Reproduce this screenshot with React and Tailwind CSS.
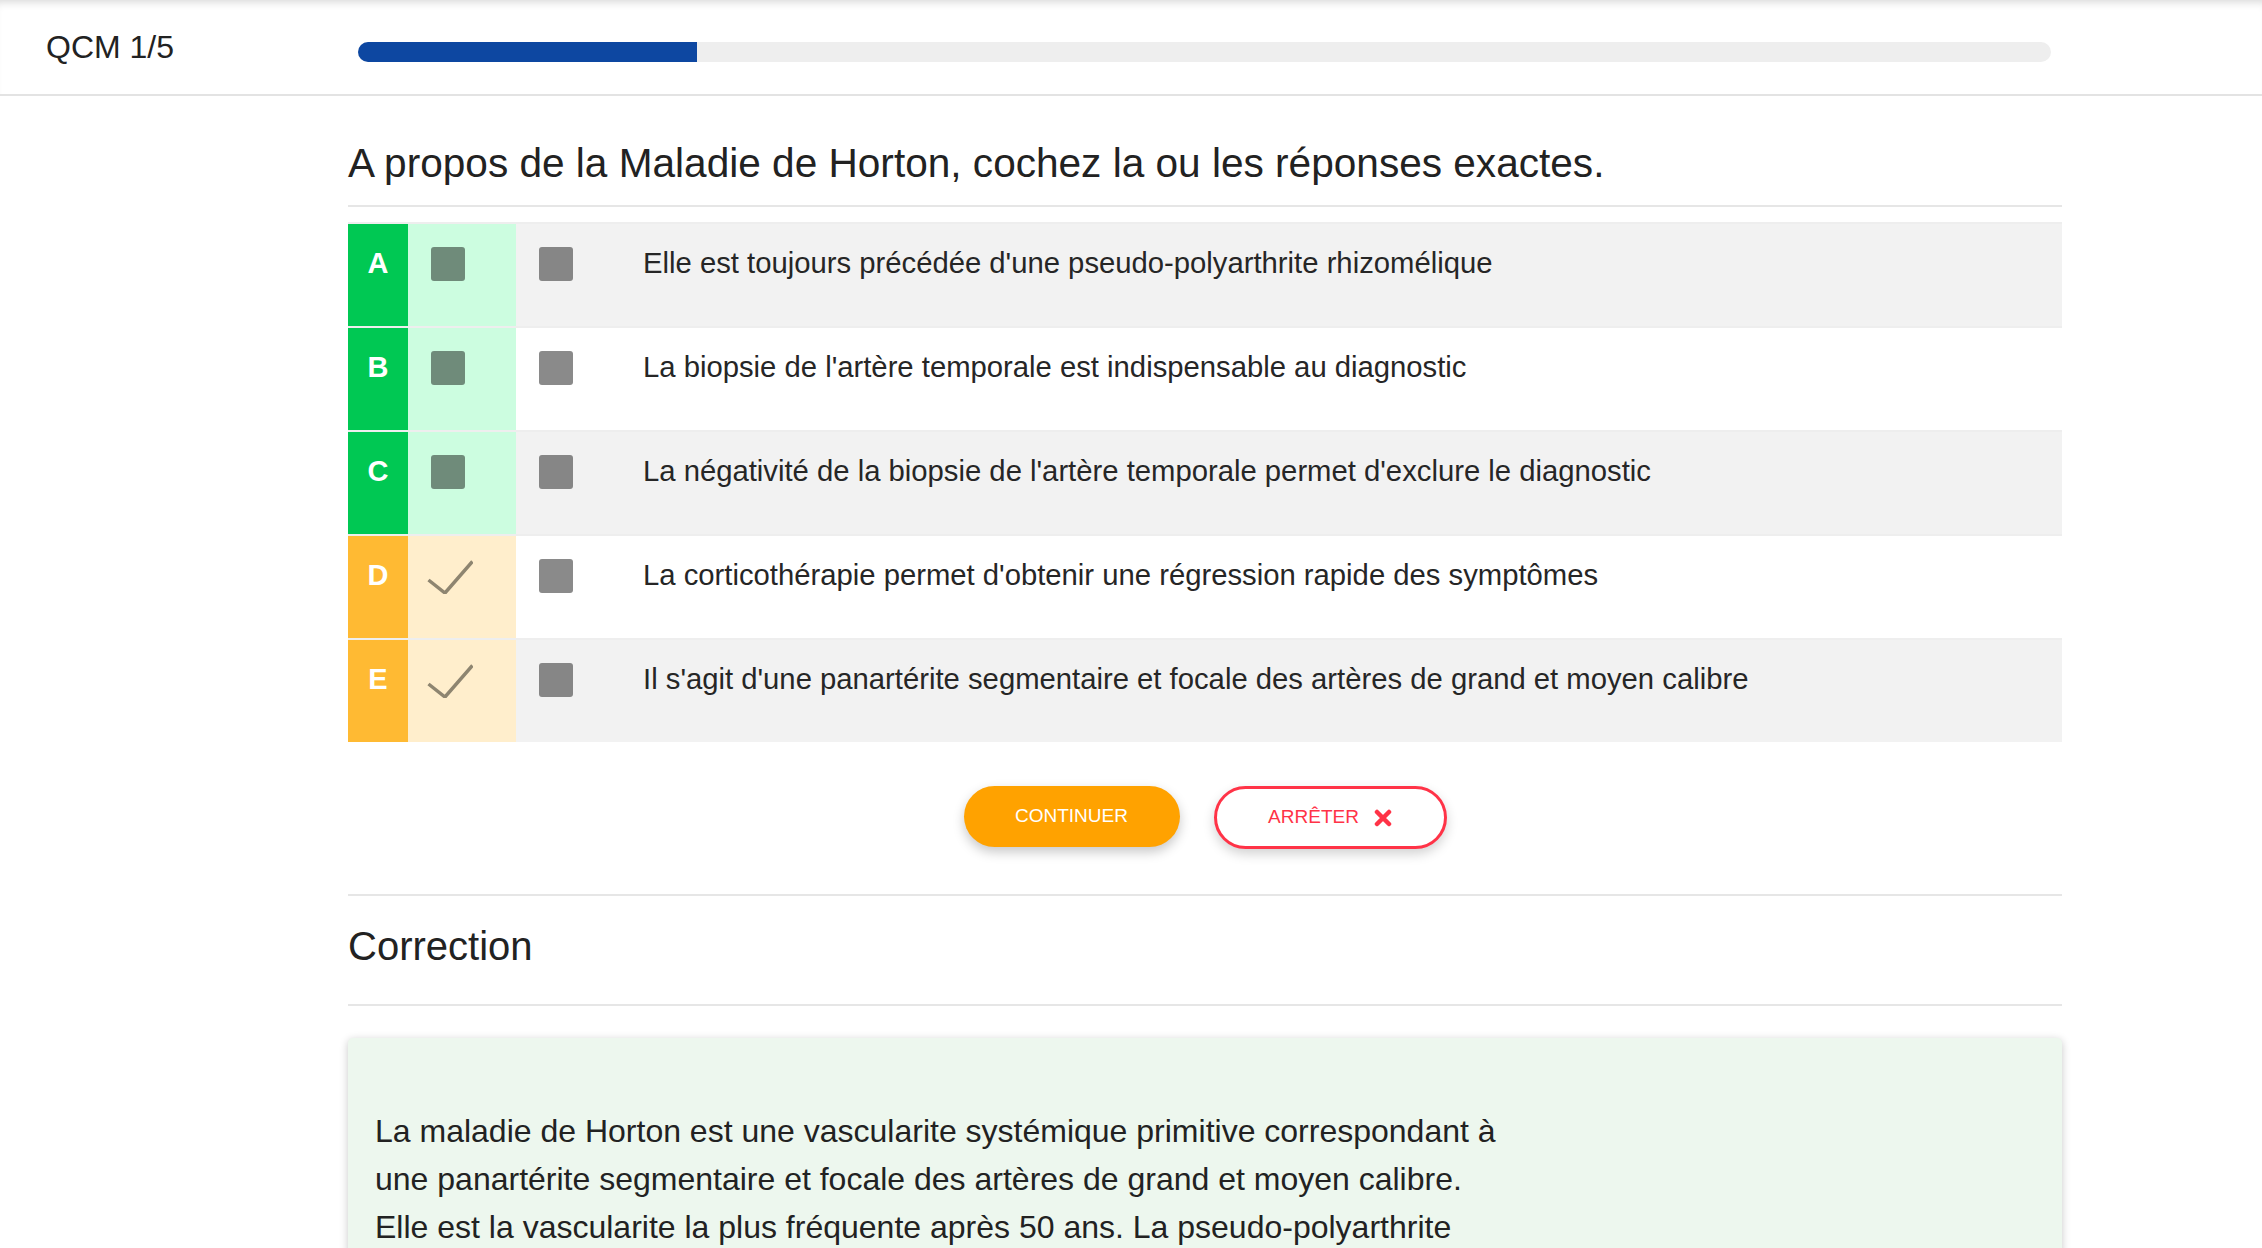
const OPTIONS = [
  { letter: "A", text: "Elle est toujours précédée d'une pseudo-polyarthrite rhizomélique", correct: false },
  { letter: "B", text: "La biopsie de l'artère temporale est indispensable au diagnostic", correct: false },
  { letter: "C", text: "La négativité de la biopsie de l'artère temporale permet d'exclure le diagnostic", correct: false },
  { letter: "D", text: "La corticothérapie permet d'obtenir une régression rapide des symptômes", correct: true },
  { letter: "E", text: "Il s'agit d'une panartérite segmentaire et focale des artères de grand et moyen calibre", correct: true },
];

const Check = () => (
  <svg width="46" height="34" viewBox="0 0 46 34" fill="none">
    <path d="M1.5 20 L18 33 L45.5 1.5" stroke="#8e8570" strokeWidth="3.5" />
  </svg>
);

const OptionRow = ({ option, index }) => {
  const striped = index % 2 === 0;
  return (
    <div className="flex h-[104px] border-t-2 border-[#eeeeee]">
      <div
        className={
          option.correct
            ? "w-[60px] bg-[#ffba33] pt-[23px] text-center text-[29px] leading-[33px] font-bold text-white"
            : "w-[60px] bg-[#00c853] pt-[23px] text-center text-[29px] leading-[33px] font-bold text-white"
        }
      >
        {option.letter}
      </div>
      <div className={option.correct ? "w-[108px] bg-[#ffeecc]" : "w-[108px] bg-[#ccfde0]"}>
        {option.correct ? (
          <div className="pl-[19px] pt-[24px]">
            <Check />
          </div>
        ) : (
          <div className="ml-[23px] mt-[23px] h-[34px] w-[34px] rounded-[3px] bg-[#6f8b7a]" />
        )}
      </div>
      <div className={striped ? "flex flex-1 items-start bg-[#f2f2f2] pl-[23px] pt-[23px]" : "flex flex-1 items-start bg-white pl-[23px] pt-[23px]"}>
        <div className={striped ? "h-[34px] w-[34px] rounded-[3px] bg-[#868686]" : "h-[34px] w-[34px] rounded-[3px] bg-[#8a8a8a]"} />
        <p className="ml-[70px] text-[29.25px] leading-[33px] text-[#262626]">{option.text}</p>
      </div>
    </div>
  );
};

export default function App() {
  const progress = 1 / 5;

  return (
    <div className="min-h-screen bg-white font-['Liberation_Sans',Arial,sans-serif] text-[#222222]">
      <header className="flex h-[96px] items-center border-b-2 border-[#e3e3e3] shadow-[inset_0_8px_8px_-6px_rgba(0,0,0,0.16)]">
        <div className="w-[358px] pl-[46px] text-[32px] leading-none">QCM 1/5</div>
        <div className="mt-[10px] h-[20px] w-[1693px] overflow-hidden rounded-[10px] bg-[#eeeeee]">
          <div className="h-full bg-[#0d47a1]" style={{ width: `${progress * 100}%` }} />
        </div>
      </header>

      <main className="ml-[348px] w-[1714px] pt-[43px]">
        <h1 className="text-[40.6px] leading-[48px]">
          A propos de la Maladie de Horton, cochez la ou les réponses exactes.
        </h1>
        <div className="mt-[18px] h-[2px] bg-[#e6e6e6]" />

        <div className="mt-[15px]">
          {OPTIONS.map((option, i) => (
            <OptionRow key={option.letter} option={option} index={i} />
          ))}
        </div>

        <div className="mt-[44px] flex items-start justify-center gap-[34px]">
          <button className="h-[61px] w-[216px] rounded-full bg-[#ffa200] text-[19px] text-white shadow-[0_5px_12px_rgba(0,0,0,0.22)]">
            CONTINUER
          </button>
          <button className="flex h-[63px] w-[233px] items-center justify-center gap-[15px] rounded-full border-[3px] border-[#ff3347] bg-white text-[19px] text-[#ff3347] shadow-[0_5px_12px_rgba(0,0,0,0.18)]">
            ARRÊTER
            <svg width="18" height="18" viewBox="0 0 18 18">
              <path d="M3 3 L15 15 M15 3 L3 15" stroke="#ff3347" strokeWidth="4.5" strokeLinecap="round" />
            </svg>
          </button>
        </div>

        <div className="mt-[45px] h-[2px] bg-[#e6e6e6]" />
        <h2 className="mt-[26px] text-[40px] leading-[48px]">Correction</h2>
        <div className="mt-[34px] h-[2px] bg-[#e6e6e6]" />

        <div className="mt-[32px] rounded-[5px] bg-[#edf7ee] pb-[48px] pl-[27px] pt-[69px] text-[32px] leading-[48px] text-[#222222] shadow-[0_2px_9px_rgba(0,0,0,0.22)]">
          <p>
            La maladie de Horton est une vascularite systémique primitive correspondant à
            <br />
            une panartérite segmentaire et focale des artères de grand et moyen calibre.
            <br />
            Elle est la vascularite la plus fréquente après 50 ans. La pseudo-polyarthrite
          </p>
        </div>
      </main>
    </div>
  );
}
